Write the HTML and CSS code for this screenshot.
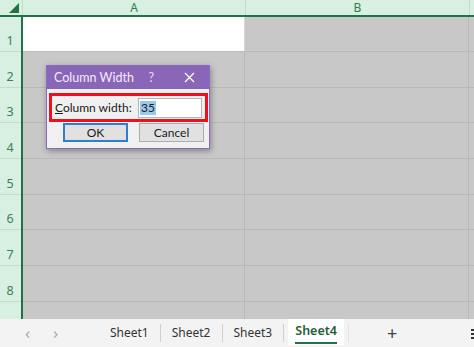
FILE: index.html
```html
<!DOCTYPE html>
<html>
<head>
<meta charset="utf-8">
<link rel="stylesheet" href="styles.css">
</head>
<body>
<div class="app">
  <div class="sheet">
    <div class="colhead">
      <div class="corner"><span class="tri"></span></div>
      <div class="ch ch-a">A</div>
      <div class="ch ch-b">B</div>
      <div class="ch ch-c"></div>
    </div>
    <div class="body">
      <div class="rowheads">
        <div class="rh r1">1</div>
        <div class="rh">2</div>
        <div class="rh">3</div>
        <div class="rh">4</div>
        <div class="rh">5</div>
        <div class="rh">6</div>
        <div class="rh">7</div>
        <div class="rh">8</div>
        <div class="rh rlast"></div>
      </div>
      <div class="cells">
        <div class="row r1"><div class="c ca white"></div><div class="c cb"></div><div class="c cc"></div></div>
        <div class="row"><div class="c ca"></div><div class="c cb"></div><div class="c cc"></div></div>
        <div class="row"><div class="c ca"></div><div class="c cb"></div><div class="c cc"></div></div>
        <div class="row"><div class="c ca"></div><div class="c cb"></div><div class="c cc"></div></div>
        <div class="row"><div class="c ca"></div><div class="c cb"></div><div class="c cc"></div></div>
        <div class="row"><div class="c ca"></div><div class="c cb"></div><div class="c cc"></div></div>
        <div class="row"><div class="c ca"></div><div class="c cb"></div><div class="c cc"></div></div>
        <div class="row"><div class="c ca"></div><div class="c cb"></div><div class="c cc"></div></div>
        <div class="row rlast"><div class="c ca"></div><div class="c cb"></div><div class="c cc"></div></div>
      </div>
    </div>
  </div>
  <div class="tabs">
    <span class="nav">&lsaquo;</span>
    <span class="nav nav2">&rsaquo;</span>
    <span class="tab t1">Sheet1</span>
    <span class="sep"></span>
    <span class="tab">Sheet2</span>
    <span class="sep"></span>
    <span class="tab">Sheet3</span>
    <span class="sep"></span>
    <span class="tab active">Sheet4</span>
    <span class="sep light"></span>
    <span class="plus">+</span>
    <span class="more"><i></i><i></i><i></i></span>
  </div>

  <div class="dialog">
    <div class="title">
      <span class="ttext">Column Width</span>
      <span class="help">?</span>
      <span class="close">
        <svg width="11" height="11" viewBox="0 0 11 11"><path d="M1 1L10 10M10 1L1 10" stroke="#fff" stroke-width="1.3" fill="none"/></svg>
      </span>
    </div>
    <div class="dbody">
      <div class="field">
        <span class="lbl"><u>C</u>olumn width:</span>
        <span class="input"><span class="sel">35</span></span>
      </div>
      <div class="buttons">
        <span class="btn ok">OK</span>
        <span class="btn">Cancel</span>
      </div>
    </div>
  </div>
</div>
</body>
</html>
```

FILE: styles.css
```css
* { box-sizing: border-box; }
html, body { margin: 0; padding: 0; }
body {
  width: 474px;
  height: 347px;
  overflow: hidden;
  font-family: "Noto Sans", "Open Sans", sans-serif;
  background: #f3f3f3;
}
.app {
  position: relative;
  width: 474px;
  height: 347px;
  display: flex;
  flex-direction: column;
}
.sheet {
  height: 319px;
  display: flex;
  flex-direction: column;
  overflow: hidden;
}
.colhead {
  height: 17px;
  display: flex;
  background: #d7f0e1;
  border-bottom: 2px solid #217346;
}
.corner {
  width: 23px;
  position: relative;
  border-right: 1px solid #c4dccd;
}
.tri {
  position: absolute;
  right: 3px;
  bottom: 2px;
  width: 0;
  height: 0;
  border-left: 10px solid transparent;
  border-bottom: 10px solid #217346;
}
.ch {
  font-size: 12px;
  color: #2e7d50;
  text-align: center;
  line-height: 15px;
  border-right: 1px solid #c4dccd;
}
.ch-a { width: 223px; }
.ch-b { width: 224px; }
.ch-c { flex: 1; border-right: none; }
.body {
  flex: 1;
  display: flex;
}
.rowheads {
  width: 23px;
  background: #d7f0e1;
  border-right: 2px solid #217346;
  display: flex;
  flex-direction: column;
}
.rh {
  height: 35.7px;
  flex: none;
  font-size: 12.5px;
  color: #3e7f59;
  display: flex;
  align-items: flex-end;
  justify-content: center;
  padding-bottom: 2px;
  padding-right: 1px;
  border-bottom: 1px solid #c4dccd;
}
.rh.r1 { height: 35px; }
.rh.rlast { flex: 1; border-bottom: none; }
.cells {
  flex: 1;
  display: flex;
  flex-direction: column;
  background: #c8c8c8;
}
.row {
  height: 35.7px;
  flex: none;
  display: flex;
  border-bottom: 1px solid #b9b9b9;
}
.row.r1 { height: 35px; }
.row.rlast { flex: 1; border-bottom: none; }
.c { border-right: 1px solid #b9b9b9; }
.ca { width: 222px; }
.cb { width: 224px; }
.cc { flex: 1; border-right: none; }
.white { background: #fff; border-right-color: #d8d8d8; }

.tabs {
  flex: 1;
  display: flex;
  align-items: center;
  background: #f3f3f3;
  font-size: 12px;
  color: #333;
  position: relative;
}
.nav {
  font-size: 17px;
  color: #aaa;
  position: absolute;
  top: 2px;
}
.nav { left: 25px; }
.nav2 { left: 53px; }
.tab {
  padding: 0 11px;
  line-height: 28px;
}
.t1 { margin-left: 99px; }
.sep {
  width: 1px;
  height: 18px;
  background: #d0d0d0;
}
.sep.light { background: #e2e2e2; }
.tab.active {
  background: #fff;
  font-weight: 600;
  font-size: 12.5px;
  color: #1e5e3b;
  margin: 0 4px;
  padding: 0 7px;
  height: 26px;
  align-self: flex-start;
  line-height: 24px;
  position: relative;
}
.tab.active::after {
  content: "";
  position: absolute;
  left: 7px;
  right: 7px;
  bottom: 1px;
  height: 2px;
  background: #217346;
}
.plus {
  margin-left: 38px;
  font-size: 18px;
  color: #444;
  line-height: 20px;
}
.more {
  position: absolute;
  left: 471px;
  top: 10px;
  display: flex;
  flex-direction: column;
  gap: 2px;
}
.more i { display: block; width: 4px; height: 2px; background: #333; }

.dialog {
  position: absolute;
  left: 46px;
  top: 65px;
  width: 164px;
  height: 84px;
  background: #f0f0f0;
  border: 1px solid #8c6bbf;
  box-shadow: 1px 2px 6px rgba(0,0,0,0.35);
  font-family: "Lato", "Noto Sans", sans-serif;
  font-size: 12px;
  color: #1a1a1a;
}
.title {
  height: 23px;
  background: #8a66b9;
  color: #f2ecfa;
  display: flex;
  align-items: center;
  font-size: 12.5px;
  padding-left: 7px;
}
.ttext { width: 97px; }
.help { width: 36px; text-align: left; color: #e8ddf5; font-size: 12.5px; }
.close { width: 26px; display: flex; align-items: center; }
.dbody {
  padding: 4px 1px 0 2px;
}
.field {
  height: 29px;
  border: 3px solid #f0101c;
  display: flex;
  align-items: center;
  padding-left: 3px;
  width: 159px;
}
.lbl { width: 83px; }
.input {
  width: 64px;
  height: 20px;
  background: #fff;
  border: 1px solid #b4b4b4;
  display: flex;
  align-items: center;
  padding-left: 1px;
}
.sel {
  background: #99c9ef;
  color: #1a1a1a;
  line-height: 14px;
  padding: 0 1px;
}
.buttons {
  display: flex;
  gap: 11px;
  padding-left: 14px;
  margin-top: 1px;
}
.btn {
  width: 65px;
  height: 19px;
  border: 1px solid #adadad;
  background: #e1e1e1;
  text-align: center;
  line-height: 17px;
}
.btn.ok {
  border: 2px solid #2f7fd0;
  line-height: 15px;
}
```
